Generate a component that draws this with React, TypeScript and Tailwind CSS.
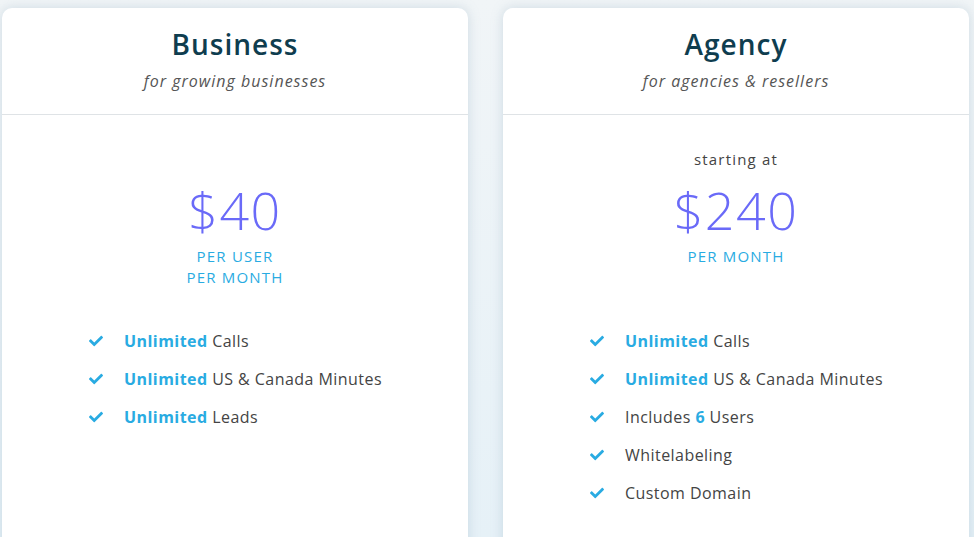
import React from "react";
import { FaCheck } from "react-icons/fa";

type Feature = { bold?: string; pre?: string; num?: string; post?: string };

const Check = () => (
  <FaCheck className="text-[#29abe2] w-[14px] h-[14px] shrink-0" />
);

function FeatureRow({ f }: { f: Feature }) {
  return (
    <li className="h-[38px] flex items-center">
      <Check />
      <span className="ml-[21px] text-[16px] tracking-[0.45px] text-[#444]">
        {f.bold && <span className="font-bold text-[#29abe2]">{f.bold} </span>}
        {f.pre}
        {f.num && <span className="font-bold text-[#29abe2]">{f.num}</span>}
        {f.post}
      </span>
    </li>
  );
}

function Card({
  title,
  subtitle,
  starting,
  price,
  per,
  features,
}: {
  title: string;
  subtitle: string;
  starting: boolean;
  price: string;
  per: string[];
  features: Feature[];
}) {
  return (
    <div className="w-[466px] h-[560px] shrink-0 bg-white rounded-[10px] shadow-[0_0_12px_rgba(140,170,190,0.35)]">
      <div className="pt-[20px] pb-[21px] border-b border-[#dfe3e6] text-center">
        <div className="text-[28px] leading-[32px] tracking-[1px] font-semibold text-[#0f3d4f]">{title}</div>
        <div className="mt-[9px] text-[16px] leading-[24px] tracking-[1px] italic text-[#555]">{subtitle}</div>
      </div>
      <div className="pt-[34px] text-center">
        <div className={`text-[15px] leading-[20px] tracking-[1.2px] text-[#444] ${starting ? "" : "invisible"}`}>starting at</div>
        <div className="mt-[13px] text-[52px] leading-[56px] tracking-[1.5px] font-light text-[#6a6af8]">{price}</div>
        <div className="mt-[8px] h-[42px] text-[15px] leading-[21px] tracking-[1.2px] text-[#29abe2] uppercase">
          {per.map((p) => (
            <div key={p}>{p}</div>
          ))}
        </div>
      </div>
      <ul className="mt-[34px] pl-[87px]">
        {features.map((f, i) => (
          <FeatureRow key={i} f={f} />
        ))}
      </ul>
    </div>
  );
}

export default function App() {
  return (
    <div
      className="w-[974px] h-[537px] overflow-hidden bg-gradient-to-b from-[#f1f5f7] to-[#e6f1f7] flex gap-[35px] pl-[2px] pt-[8px]"
      style={{ fontFamily: '"Open Sans", sans-serif' }}
    >
      <Card
        title="Business"
        subtitle="for growing businesses"
        starting={false}
        price="$40"
        per={["Per User", "Per Month"]}
        features={[
          { bold: "Unlimited", pre: "Calls" },
          { bold: "Unlimited", pre: "US & Canada Minutes" },
          { bold: "Unlimited", pre: "Leads" },
        ]}
      />
      <Card
        title="Agency"
        subtitle="for agencies & resellers"
        starting={true}
        price="$240"
        per={["Per Month"]}
        features={[
          { bold: "Unlimited", pre: "Calls" },
          { bold: "Unlimited", pre: "US & Canada Minutes" },
          { pre: "Includes ", num: "6", post: " Users" },
          { pre: "Whitelabeling" },
          { pre: "Custom Domain" },
        ]}
      />
    </div>
  );
}
